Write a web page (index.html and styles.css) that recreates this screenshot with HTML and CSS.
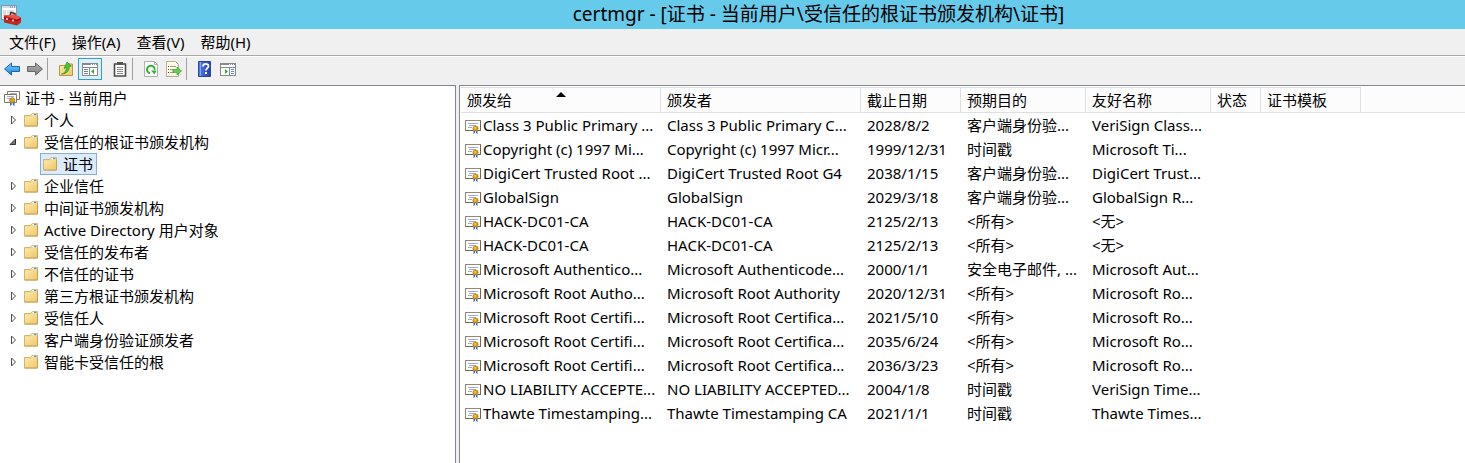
FILE: index.html
```html
<!DOCTYPE html>
<html lang="zh-CN">
<head>
<meta charset="utf-8">
<title>certmgr - [证书 - 当前用户\受信任的根证书颁发机构\证书]</title>
<link rel="stylesheet" href="styles.css">
</head>
<body>
<svg class="defs" aria-hidden="true">
  <defs>
    <linearGradient id="g-folder" x1="0" y1="0" x2="1" y2="1"><stop offset="0" stop-color="#fdeaae"/><stop offset="1" stop-color="#efc768"/></linearGradient>
    <linearGradient id="g-blue" x1="0" y1="0" x2="0" y2="1"><stop offset="0" stop-color="#7fd0ff"/><stop offset="1" stop-color="#1484dc"/></linearGradient>
    <linearGradient id="g-gray" x1="0" y1="0" x2="0" y2="1"><stop offset="0" stop-color="#b5b5b5"/><stop offset="1" stop-color="#7c7c7c"/></linearGradient>
    <linearGradient id="g-help" x1="0" y1="0" x2="1" y2="0"><stop offset="0" stop-color="#5a7ee0"/><stop offset="1" stop-color="#1f3fae"/></linearGradient>
  </defs>
  <symbol id="folder" viewBox="0 0 16 16">
    <path d="M1.500 3.500h6l1.500-2h5.500v12.500h-13z" fill="#f3d88c" stroke="#d3b468"/>
    <path d="M9.500 2.500h4.500" stroke="#fff" stroke-width="1.500"/><path d="M11 2.500h2.500" stroke="#4a9ae8" stroke-width="1.500"/>
    <path d="M2 4.500h6l1.500-1h4.500v10h-12z" fill="url(#g-folder)"/>
    <path d="M1.500 14h13v-10" fill="none" stroke="#c2a05a"/>
  </symbol>
  <symbol id="cert" viewBox="0 0 16 16">
    <rect x=".5" y="2.500" width="15" height="10" fill="#fff" stroke="#95886f"/>
    <path d="M.5 12.500h15v-10" fill="none" stroke="#72654d"/>
    <path d="M3 5.500h10M4 7.500h7M3 9.500h4" stroke="#a2a9dc"/>
    <path d="M8.500 11v5l2-1.500 2 1.500v-5z" fill="#2f6fdc"/><path d="M10.500 12v3" stroke="#fff"/>
    <circle cx="10.500" cy="10.500" r="2.600" fill="#dba416" stroke="#b07c0a" stroke-width=".8"/><circle cx="10" cy="10" r=".8" fill="#ffe27a"/>
  </symbol>
  <symbol id="certs" viewBox="0 0 16 16">
    <path d="M3.500 1.500h12v8h-12z" fill="#fff" stroke="#857860"/><path d="M6 3.500h7" stroke="#a2a9dc"/>
    <path d="M.5 4.500h12v8h-12z" fill="#fff" stroke="#857860"/><path d="M3 6.500h7M3 8.500h4" stroke="#a2a9dc"/>
    <path d="M6 11v5l2.200-1.500 2.300 1.500v-5z" fill="#2f6fdc"/><path d="M8.200 12v3" stroke="#fff"/>
    <circle cx="8.200" cy="10.300" r="2.600" fill="#dba416" stroke="#b07c0a" stroke-width=".8"/>
  </symbol>
  <symbol id="closed" viewBox="0 0 8 10"><path d="M2.500 1v8l4-4z" fill="#fff" stroke="#4d4d4d" stroke-width="1"/></symbol>
  <symbol id="open" viewBox="0 0 8 10"><path d="M6.500 2v5.500h-5.500z" fill="#777" stroke="#333"/></symbol>
  <symbol id="app" viewBox="0 0 22 22">
    <rect x="1.500" y="1.500" width="15" height="14" fill="#fff" stroke="#8798a8"/><path d="M2 3h14" stroke="#d3dce4" stroke-width="2"/><path d="M10 3h1M12 3h1M14 3h1" stroke="#56697c"/>
    <path d="M3 6h3v8h-3z" fill="#d5dde6"/><path d="M7 7h7M7 9h4" stroke="#b9c4d0"/>
    <path d="M10 11l1-2.500 4 1v3" fill="none" stroke="#3c3030" stroke-width="1.500"/>
    <path d="M4 11.500l10-1 7 3v5l-4 3-13-3z" fill="#c42621"/><path d="M4 11.500l10-1 7 3-4 2z" fill="#ef5146"/><path d="M4 14l13 2.500 4-2" fill="none" stroke="#7f1110"/><path d="M7 14v2M13 15.500v2" stroke="#e8e8e8" stroke-width="1.500"/>
  </symbol>
  <symbol id="back" viewBox="0 0 16 16"><path d="M.5 8l7-6v3.500h8v5h-8v3.500z" fill="url(#g-blue)" stroke="#1c65a8"/></symbol>
  <symbol id="forward" viewBox="0 0 16 16"><path d="M15.500 8l-7-6v3.500h-8v5h8v3.500z" fill="url(#g-gray)" stroke="#666"/></symbol>
  <symbol id="up" viewBox="0 0 16 16">
    <path d="M1.500 4.500h7l1.500-1.500h4.500v11.500h-13z" fill="url(#g-folder)" stroke="#b99545"/>
    <path d="M3.500 13c3.500-1 5-3.500 4.800-6.500l-2.300 1 3-6.500 4.500 4-2.300.5c.3 4.500-3 7.500-7.700 7.500z" fill="#4cc62e" stroke="#2b9420" stroke-width=".7"/>
  </symbol>
  <symbol id="tree" viewBox="0 0 16 16">
    <rect x=".5" y="2.500" width="15" height="12" fill="#fff" stroke="#858a90"/><path d="M1 3.500h14M1 6.500h14" stroke="#858a90"/><path d="M9 3.500h1M11 3.500h1M13 3.500h1" stroke="#fff"/>
    <path d="M7.500 7v7" stroke="#858a90"/><path d="M2 8.500h4M2 10.500h4M2 12.500h4" stroke="#71879c"/><path d="M12 8v5l-3-2.500z" fill="#35ad2c"/>
  </symbol>
  <symbol id="actions" viewBox="0 0 16 16">
    <rect x=".5" y="2.500" width="15" height="12" fill="#fff" stroke="#858a90"/><path d="M1 3.500h14M1 6.500h14" stroke="#858a90"/><path d="M9 3.500h1M11 3.500h1M13 3.500h1" stroke="#fff"/>
    <path d="M9.500 7v7" stroke="#858a90"/><path d="M11 8.500h3M11 10.500h3M11 12.500h3" stroke="#5e8fc3"/><path d="M5 8v5l3-2.500z" fill="#35ad2c"/>
  </symbol>
  <symbol id="clip" viewBox="0 0 16 16">
    <path d="M2.500 3h11v12h-11z" fill="#fff" stroke="#4b4b4b" stroke-width="1.600"/><path d="M5 1h6v3h-6z" fill="#555"/><path d="M5 6.500h6M5 8.500h6M5 10.500h6M5 12.500h6" stroke="#888"/>
  </symbol>
  <symbol id="refresh" viewBox="0 0 16 16">
    <path d="M1.500.5h10l3 3v12h-13z" fill="#fff" stroke="#b1b1aa"/><path d="M11.500.5v3h3" fill="none" stroke="#b1b1aa"/>
    <path d="M7 12.200a3.800 3.800 0 1 1 4.600-3.400" fill="none" stroke="#31ae3a" stroke-width="2"/><path d="M8 9.500h5.500l-2 4z" fill="#31ae3a"/>
  </symbol>
  <symbol id="export" viewBox="0 0 16 16">
    <path d="M.5.5h9l3 3v12h-12z" fill="#fffbe6" stroke="#b6af91"/><path d="M2 5.500h1M2 8.500h1M2 11.500h1" stroke="#444"/><path d="M4 5.500h6M4 8.500h4M4 11.500h4" stroke="#a49d7c"/>
    <path d="M7 8.500h4v-2.500l4.500 4-4.500 4v-2.500h-4z" fill="#62ce4e" stroke="#38a52d" stroke-width=".7"/>
  </symbol>
  <symbol id="help" viewBox="0 0 16 16">
    <path d="M1.500.5h12v15h-12z" fill="url(#g-help)" stroke="#2947a0"/><path d="M3.500 1v14" stroke="#8aa4ee"/>
    <path d="M6 5.500c0-3.500 5.500-3.300 5.500-.3 0 2-2.500 2-2.500 4.300" fill="none" stroke="#fff" stroke-width="1.800"/><path d="M8 11h2v2h-2z" fill="#fff"/>
  </symbol>
</svg>

<header class="titlebar">
  <svg class="app-icon" aria-hidden="true"><use href="#app"/></svg>
  <h1 class="title">certmgr - [证书 - 当前用户\受信任的根证书颁发机构\证书]</h1>
</header>
<nav class="menubar">
  <button>文件(F)</button><button>操作(A)</button><button>查看(V)</button><button>帮助(H)</button>
</nav>
<div class="toolbar" role="toolbar">
  <button aria-label="后退"><svg><use href="#back"/></svg></button>
  <button aria-label="前进"><svg><use href="#forward"/></svg></button>
  <span class="sep"></span>
  <button aria-label="向上一级"><svg><use href="#up"/></svg></button>
  <button class="pressed" aria-label="显示控制台树" aria-pressed="true"><svg><use href="#tree"/></svg></button>
  <button class="apart" aria-label="粘贴"><svg><use href="#clip"/></svg></button>
  <span class="sep"></span>
  <button aria-label="刷新"><svg><use href="#refresh"/></svg></button>
  <button aria-label="导出列表"><svg><use href="#export"/></svg></button>
  <span class="sep"></span>
  <button aria-label="帮助"><svg><use href="#help"/></svg></button>
  <button aria-label="显示操作窗格"><svg><use href="#actions"/></svg></button>
</div>
<main class="panes">
  <ul class="tree" role="tree">
    <li class="node root"><svg class="icon"><use href="#certs"/></svg><span>证书 - 当前用户</span></li>
    <li class="node"><svg class="arrow"><use href="#closed"/></svg><svg class="icon"><use href="#folder"/></svg><span>个人</span></li>
    <li class="node"><svg class="arrow"><use href="#open"/></svg><svg class="icon"><use href="#folder"/></svg><span>受信任的根证书颁发机构</span></li>
    <li class="node child"><span class="selected"><svg class="icon"><use href="#folder"/></svg><span>证书</span></span></li>
    <li class="node"><svg class="arrow"><use href="#closed"/></svg><svg class="icon"><use href="#folder"/></svg><span>企业信任</span></li>
    <li class="node"><svg class="arrow"><use href="#closed"/></svg><svg class="icon"><use href="#folder"/></svg><span>中间证书颁发机构</span></li>
    <li class="node"><svg class="arrow"><use href="#closed"/></svg><svg class="icon"><use href="#folder"/></svg><span>Active Directory 用户对象</span></li>
    <li class="node"><svg class="arrow"><use href="#closed"/></svg><svg class="icon"><use href="#folder"/></svg><span>受信任的发布者</span></li>
    <li class="node"><svg class="arrow"><use href="#closed"/></svg><svg class="icon"><use href="#folder"/></svg><span>不信任的证书</span></li>
    <li class="node"><svg class="arrow"><use href="#closed"/></svg><svg class="icon"><use href="#folder"/></svg><span>第三方根证书颁发机构</span></li>
    <li class="node"><svg class="arrow"><use href="#closed"/></svg><svg class="icon"><use href="#folder"/></svg><span>受信任人</span></li>
    <li class="node"><svg class="arrow"><use href="#closed"/></svg><svg class="icon"><use href="#folder"/></svg><span>客户端身份验证颁发者</span></li>
    <li class="node"><svg class="arrow"><use href="#closed"/></svg><svg class="icon"><use href="#folder"/></svg><span>智能卡受信任的根</span></li>
  </ul>
  <section class="list">
    <table class="certs">
      <colgroup><col class="w200"><col class="w200"><col class="w100"><col class="w125"><col class="w125"><col class="w50"><col class="w100"><col></colgroup>
      <thead><tr><th aria-sort="ascending">颁发给<svg class="sort" viewBox="0 0 10 5"><path d="M0 5l5-5 5 5z"/></svg></th><th>颁发者</th><th>截止日期</th><th>预期目的</th><th>友好名称</th><th>状态</th><th>证书模板</th><td class="filler"></td></tr></thead>
      <tbody>
        <tr><td><svg class="icon"><use href="#cert"/></svg>Class 3 Public Primary ...</td><td>Class 3 Public Primary C...</td><td>2028/8/2</td><td>客户端身份验...</td><td>VeriSign Class...</td></tr>
        <tr><td><svg class="icon"><use href="#cert"/></svg>Copyright (c) 1997 Mi...</td><td>Copyright (c) 1997 Micr...</td><td>1999/12/31</td><td>时间戳</td><td>Microsoft Ti...</td></tr>
        <tr><td><svg class="icon"><use href="#cert"/></svg>DigiCert Trusted Root ...</td><td>DigiCert Trusted Root G4</td><td>2038/1/15</td><td>客户端身份验...</td><td>DigiCert Trust...</td></tr>
        <tr><td><svg class="icon"><use href="#cert"/></svg>GlobalSign</td><td>GlobalSign</td><td>2029/3/18</td><td>客户端身份验...</td><td>GlobalSign R...</td></tr>
        <tr><td><svg class="icon"><use href="#cert"/></svg>HACK-DC01-CA</td><td>HACK-DC01-CA</td><td>2125/2/13</td><td>&lt;所有&gt;</td><td>&lt;无&gt;</td></tr>
        <tr><td><svg class="icon"><use href="#cert"/></svg>HACK-DC01-CA</td><td>HACK-DC01-CA</td><td>2125/2/13</td><td>&lt;所有&gt;</td><td>&lt;无&gt;</td></tr>
        <tr><td><svg class="icon"><use href="#cert"/></svg>Microsoft Authentico...</td><td>Microsoft Authenticode...</td><td>2000/1/1</td><td>安全电子邮件, ...</td><td>Microsoft Aut...</td></tr>
        <tr><td><svg class="icon"><use href="#cert"/></svg>Microsoft Root Autho...</td><td>Microsoft Root Authority</td><td>2020/12/31</td><td>&lt;所有&gt;</td><td>Microsoft Ro...</td></tr>
        <tr><td><svg class="icon"><use href="#cert"/></svg>Microsoft Root Certifi...</td><td>Microsoft Root Certifica...</td><td>2021/5/10</td><td>&lt;所有&gt;</td><td>Microsoft Ro...</td></tr>
        <tr><td><svg class="icon"><use href="#cert"/></svg>Microsoft Root Certifi...</td><td>Microsoft Root Certifica...</td><td>2035/6/24</td><td>&lt;所有&gt;</td><td>Microsoft Ro...</td></tr>
        <tr><td><svg class="icon"><use href="#cert"/></svg>Microsoft Root Certifi...</td><td>Microsoft Root Certifica...</td><td>2036/3/23</td><td>&lt;所有&gt;</td><td>Microsoft Ro...</td></tr>
        <tr><td><svg class="icon"><use href="#cert"/></svg>NO LIABILITY ACCEPTE...</td><td>NO LIABILITY ACCEPTED...</td><td>2004/1/8</td><td>时间戳</td><td>VeriSign Time...</td></tr>
        <tr><td><svg class="icon"><use href="#cert"/></svg>Thawte Timestamping...</td><td>Thawte Timestamping CA</td><td>2021/1/1</td><td>时间戳</td><td>Thawte Times...</td></tr>
      </tbody>
    </table>
  </section>
</main>
</body>
</html>
```
FILE: styles.css
```css
* { box-sizing: border-box; }
body {
  margin: 0;
  min-height: 100vh;
  display: flex;
  flex-direction: column;
  background: #f0f0f0;
  color: #000;
  font: 15px/22px "Noto Sans", "Noto Sans CJK SC", sans-serif;
}
button {
  border: 1px solid transparent;
  background: none;
  padding: 0;
  color: inherit;
  font: inherit;
}
.defs { position: absolute; width: 0; height: 0; }

.titlebar {
  display: grid;
  grid-template-columns: 24px 1fr;
  align-items: center;
  height: 29px;
  background: #66caeb;
}
.app-icon { width: 22px; height: 22px; }
.title {
  margin: 0;
  padding-left: 148px;
  text-align: center;
  font-size: 19px;
  font-weight: 400;
  line-height: 29px;
  white-space: nowrap;
}

.menubar {
  display: flex;
  gap: 14px;
  padding: 2px 8px;
  border-bottom: 1px solid #a9a9ac;
}
.menubar button { line-height: 20px; }

.toolbar {
  display: flex;
  align-items: center;
  height: 29px;
  padding-bottom: 4px;
  border-top: 1px solid #fff;
}
.toolbar button {
  display: flex;
  align-items: center;
  justify-content: center;
  width: 23px;
  height: 22px;
}
.toolbar svg { width: 16px; height: 16px; flex: none; }
.toolbar .pressed { width: 24px; margin-left: 1px; border-color: #2d9fd9; background: #deeffa; }
.toolbar .apart { margin-left: 6px; }
.toolbar .sep { width: 1px; height: 22px; margin: 0 6px 0 1px; background: #a0a0a0; }

.panes {
  flex: 1;
  display: grid;
  grid-template-columns: 456px 1fr;
  gap: 3px;
}
.tree {
  margin: 0;
  padding: 1px 0;
  list-style: none;
  background: #fff;
  border-top: 1px solid #828790;
  border-right: 1px solid #828790;
}
.node {
  display: flex;
  align-items: center;
  height: 22px;
  padding-left: 9px;
  white-space: nowrap;
}
.icon { width: 16px; height: 16px; flex: none; }
.node .icon { margin-right: 5px; }
.arrow { width: 8px; height: 10px; margin-right: 6px; }
.root { padding-left: 4px; }
.child { padding-left: 40px; }
.selected {
  display: flex;
  align-items: center;
  height: 22px;
  padding: 0 3px 0 1px;
  border: 1px solid #84acdd;
  background: #dcebfc;
}

.list {
  background: #fff;
  border-top: 1px solid #828790;
  border-left: 1px solid #828790;
  padding: 1px 0 0 1px;
}
.certs {
  width: 100%;
  table-layout: fixed;
  border-collapse: separate;
  border-spacing: 0;
}
.w50 { width: 50px; }
.w100 { width: 100px; }
.w125 { width: 125px; }
.w200 { width: 200px; }
.certs th {
  position: relative;
  height: 26px;
  padding: 0 0 0 6px;
  border: 1px solid #dedfe1;
  border-left: 0;
  background: #fcfcfc;
  text-align: left;
  font-weight: 400;
}
.certs .filler { border-bottom: 1px solid #dedfe1; background: #fcfcfc; }
.certs td { height: 24px; padding: 0 0 0 6px; white-space: nowrap; }
.certs td:first-child { padding-left: 4px; }
.certs .icon { margin-right: 2px; vertical-align: -3px; }
.sort { position: absolute; top: 4px; left: 50%; width: 10px; height: 5px; margin-left: -5px; }
```
